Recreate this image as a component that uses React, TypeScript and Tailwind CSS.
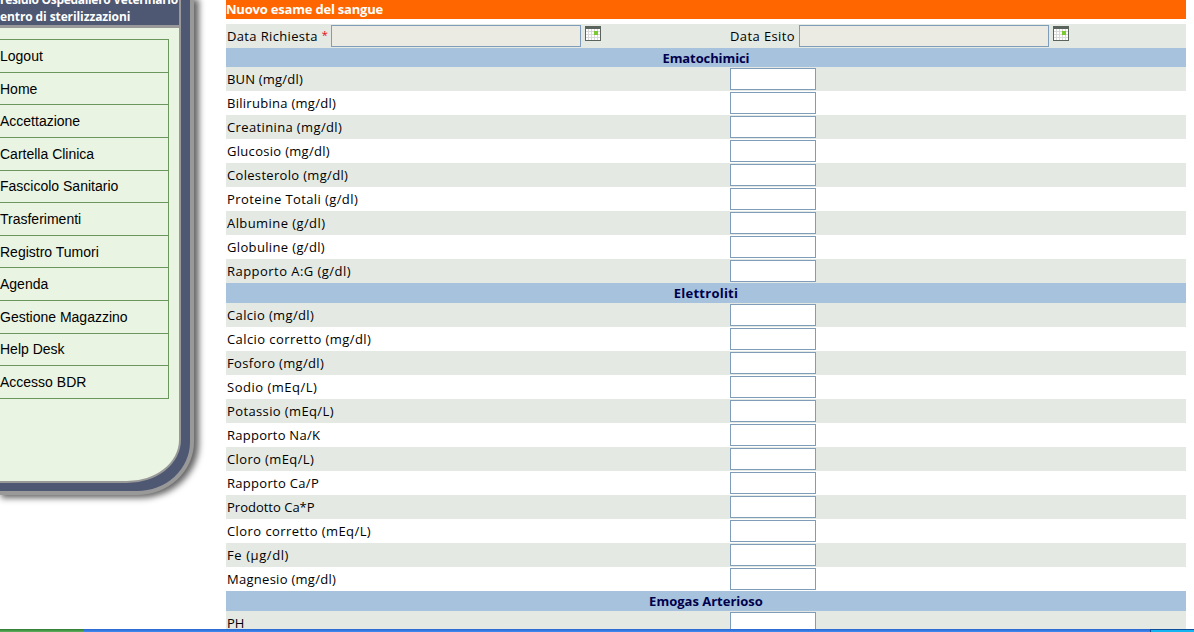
import React from "react";

const menu: [string, string][] = [
  ["Logout", "h-[33px] pt-px"],
  ["Home", "h-8 pt-px"],
  ["Accettazione", "h-[33px] pt-px"],
  ["Cartella Clinica", "h-[33px] pt-px"],
  ["Fascicolo Sanitario", "h-8 pb-px"],
  ["Trasferimenti", "h-[33px] pt-px"],
  ["Registro Tumori", "h-8 pt-px"],
  ["Agenda", "h-[33px] pt-px"],
  ["Gestione Magazzino", "h-[33px] pt-px"],
  ["Help Desk", "h-8 pb-px"],
  ["Accesso BDR", "h-[33px] pt-px"],
];

type Item = [label: string, tracking: string];

const ematochimici: Item[] = [
  ["BUN (mg/dl)", "tracking-[0.2px]"],
  ["Bilirubina (mg/dl)", "tracking-[0.28px]"],
  ["Creatinina (mg/dl)", "tracking-[0.37px]"],
  ["Glucosio (mg/dl)", "tracking-[0.3px]"],
  ["Colesterolo (mg/dl)", "tracking-[0.32px]"],
  ["Proteine Totali (g/dl)", "tracking-[0.4px]"],
  ["Albumine (g/dl)", "tracking-[0.42px]"],
  ["Globuline (g/dl)", "tracking-[0.35px]"],
  ["Rapporto A:G (g/dl)", "tracking-[0.46px]"],
];

const elettroliti: Item[] = [
  ["Calcio (mg/dl)", "tracking-[0.36px]"],
  ["Calcio corretto (mg/dl)", "tracking-[0.42px]"],
  ["Fosforo (mg/dl)", "tracking-[0.33px]"],
  ["Sodio (mEq/L)", "tracking-[0.5px]"],
  ["Potassio (mEq/L)", "tracking-[0.38px]"],
  ["Rapporto Na/K", "tracking-[0.25px]"],
  ["Cloro (mEq/L)", "tracking-[0.38px]"],
  ["Rapporto Ca/P", "tracking-[0.3px]"],
  ["Prodotto Ca*P", "tracking-[0px]"],
  ["Cloro corretto (mEq/L)", "tracking-[0.43px]"],
  ["Fe (µg/dl)", "tracking-[0.58px]"],
  ["Magnesio (mg/dl)", "tracking-[0.28px]"],
];

const emogas: Item[] = [["PH", "tracking-[0px]"]];

function CalendarIcon() {
  return (
    <svg className="ml-1 mt-px shrink-0" width="16" height="15" viewBox="0 0 16 15" shapeRendering="crispEdges">
      <rect width="16" height="15" fill="#5a635c" />
      <rect x="1" y="3" width="14" height="11" fill="#d9d9d9" />
      {[1, 4, 7, 10, 13].map((x) =>
        [3, 6, 9, 12].map((y) => <rect key={`${x}-${y}`} x={x} y={y} width="2" height="2" fill="#fff" />)
      )}
      <rect x="9" y="5" width="4" height="4" fill="#7ac92f" />
    </svg>
  );
}

function Section({ title, className, items }: { title: string; className: string; items: Item[] }) {
  return (
    <section>
      <h2 className={`${className} bg-[#a7c2dc] text-center font-bold leading-[20px] text-[#00004d]`}>{title}</h2>
      <div>
        {items.map(([label, tracking]) => (
          <label key={label} className="flex h-6 items-start pl-px pt-px odd:bg-[#e4e9e4]">
            <span className={`w-[503px] leading-[22px] ${tracking}`}>{label}</span>
            <input className="h-[22px] w-[86px] border border-[#7f9db9] bg-white outline-none" />
          </label>
        ))}
      </div>
    </section>
  );
}

function Sidebar() {
  return (
    <aside className="h-[495px] w-[194px] shrink-0 rounded-br-[57px_53px] bg-[#999] pb-1 pr-1 shadow-[3px_1px_6px_2px_#666]">
      <div className="h-full rounded-br-[53px_49px] bg-[#4e5872] pb-2 pr-[9px]">
        <div className="flex h-full flex-col overflow-hidden rounded-br-[54px_43px] bg-[#999] pb-0.5 pr-0.5">
          <div className="flex h-[25px] shrink-0 flex-col justify-end overflow-hidden whitespace-nowrap bg-[#4e5872] text-[12px] font-bold leading-[17px] text-white">
            <div className="tracking-[-0.31px]">residio Ospedaliero Veterinario</div>
            <div className="tracking-[-0.1px]">entro di sterilizzazioni</div>
          </div>
          <div className="mt-[3px] flex-1 rounded-br-[52px_41px] bg-[#eaf4e2] pr-[10px] pt-[11px]">
            <nav className="border-r border-t border-[#6b965c] font-['Liberation_Sans',sans-serif] text-[14px]">
              {menu.map(([name, spacing]) => (
                <a key={name} className={`${spacing} flex items-center border-b border-[#6b965c] text-black`}>
                  {name}
                </a>
              ))}
            </nav>
          </div>
        </div>
      </div>
    </aside>
  );
}

export default function App() {
  return (
    <div className="flex h-[632px] w-[1194px] flex-col overflow-hidden bg-white font-['Open_Sans',sans-serif] text-[13px] text-black">
      <div className="flex h-[629px] shrink-0 overflow-hidden">
        <Sidebar />
        <main className="ml-8 w-[960px] shrink-0">
          <h1 className="mb-[5px] h-[19px] bg-[#ff6600] font-bold leading-[18px] tracking-[-0.2px] text-white">Nuovo esame del sangue</h1>
          <div className="flex h-6 items-start bg-[#e4e9e4] pl-px pt-px">
            <label className="w-[104px] whitespace-nowrap leading-[22px] tracking-[0.35px]">
              Data Richiesta <span className="align-[2px] text-[11px] leading-none text-red-600">*</span>
            </label>
            <input readOnly className="h-[22px] w-[250px] border border-[#7f9db9] bg-[#ebebe4] outline-none" />
            <CalendarIcon />
            <label className="ml-[129px] w-[69px] leading-[22px] tracking-[0.4px]">Data Esito</label>
            <input readOnly className="h-[22px] w-[250px] border border-[#7f9db9] bg-[#ebebe4] outline-none" />
            <CalendarIcon />
          </div>
          <Section title="Ematochimici" className="h-[19px] tracking-[-0.1px]" items={ematochimici} />
          <Section title="Elettroliti" className="h-5 tracking-[0.25px]" items={elettroliti} />
          <Section title="Emogas Arterioso" className="h-5 tracking-[0px]" items={emogas} />
        </main>
      </div>
      <footer className="flex h-[3px] shrink-0">
        <div className="w-[84px] bg-linear-to-b from-[#2f7a2f] to-[#5fb35f]" />
        <div className="flex-1 bg-linear-to-b from-[#2b66cc] to-[#3f8cf3]" />
        <div className="w-[44px] border-l border-t border-[#0f4f99] bg-[#14b5f0]" />
      </footer>
    </div>
  );
}
